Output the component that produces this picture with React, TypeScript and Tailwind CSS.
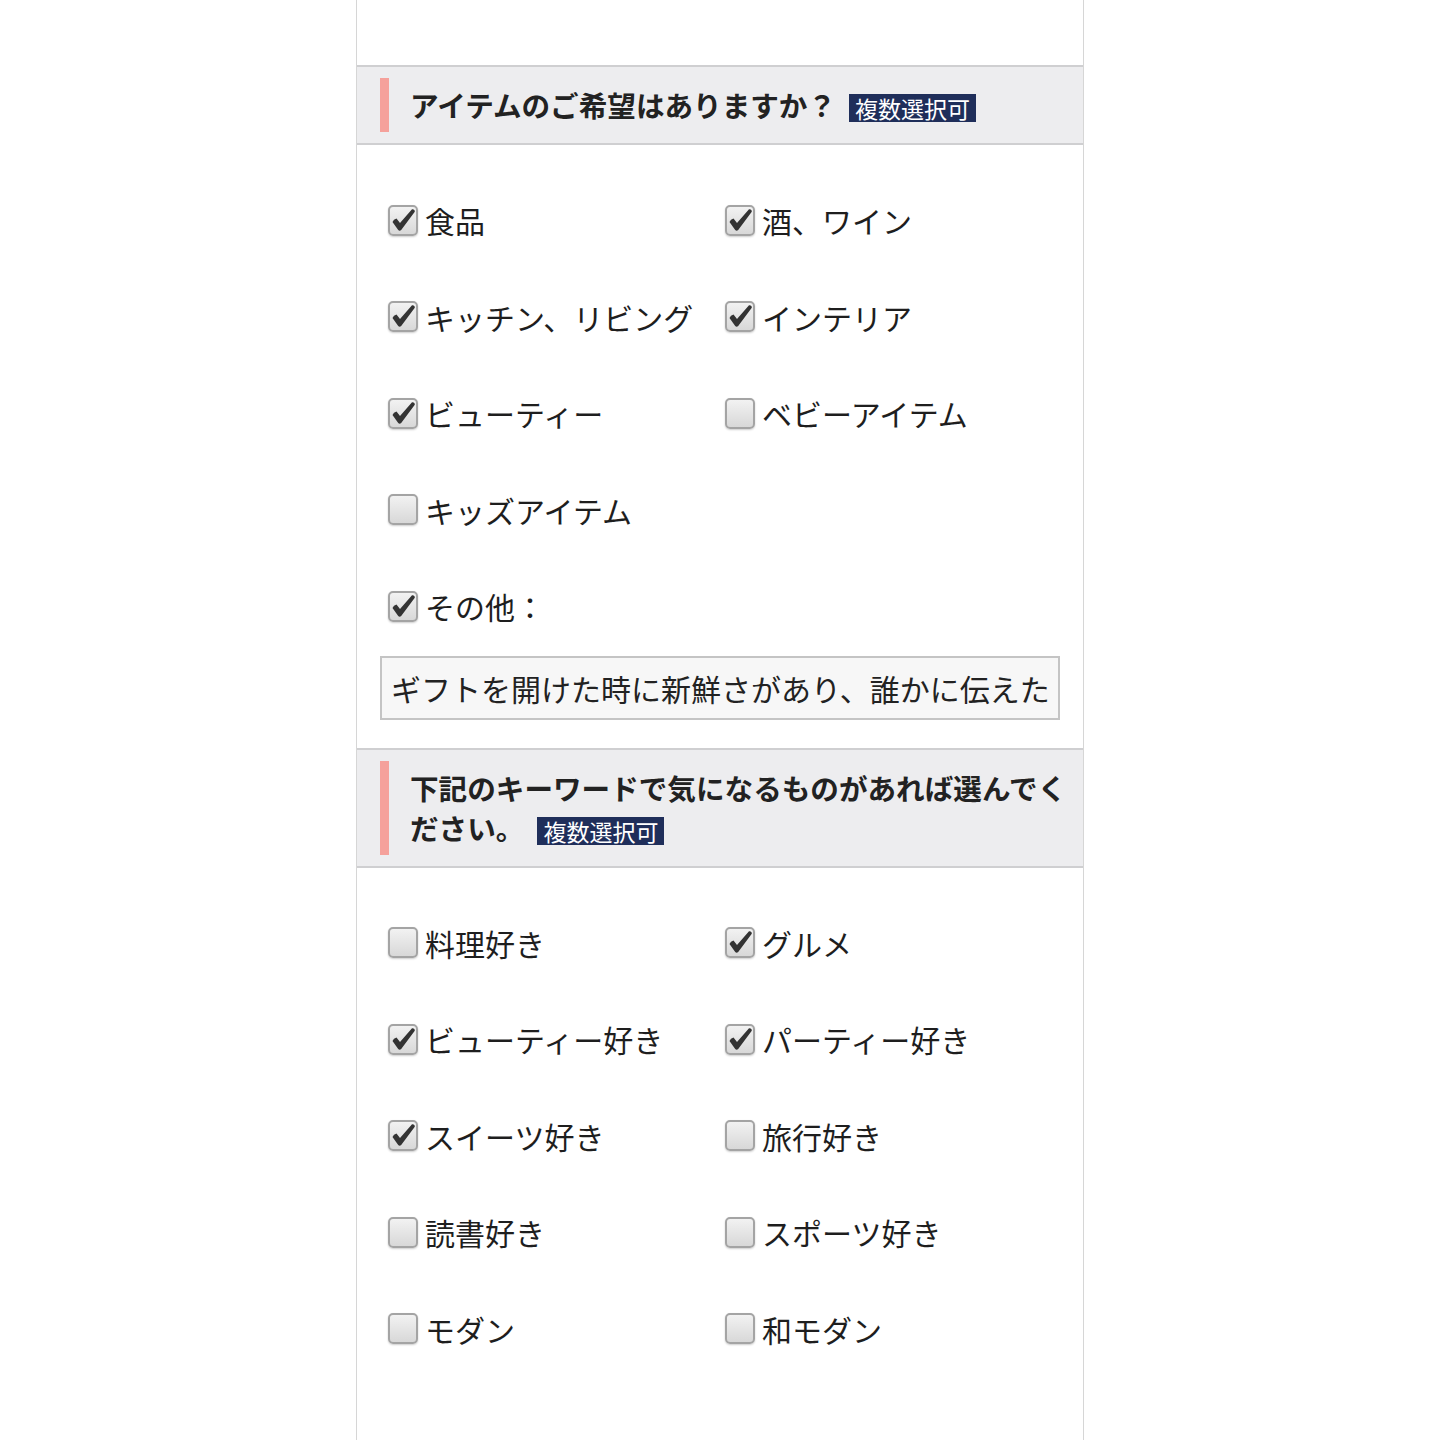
import React from 'react';

type Item = { label: string; checked: boolean };

const itemOptions: Item[] = [
  { label: '食品', checked: true },
  { label: '酒、ワイン', checked: true },
  { label: 'キッチン、リビング', checked: true },
  { label: 'インテリア', checked: true },
  { label: 'ビューティー', checked: true },
  { label: 'ベビーアイテム', checked: false },
  { label: 'キッズアイテム', checked: false },
];

const keywordOptions: Item[] = [
  { label: '料理好き', checked: false },
  { label: 'グルメ', checked: true },
  { label: 'ビューティー好き', checked: true },
  { label: 'パーティー好き', checked: true },
  { label: 'スイーツ好き', checked: true },
  { label: '旅行好き', checked: false },
  { label: '読書好き', checked: false },
  { label: 'スポーツ好き', checked: false },
  { label: 'モダン', checked: false },
  { label: '和モダン', checked: false },
];

function Checkbox({ checked }: { checked: boolean }) {
  return (
    <span className="relative flex h-[31px] w-[30px] shrink-0 items-center justify-center rounded-[5px] border-2 border-[#a4a4a4] bg-gradient-to-b from-[#f2f2f2] to-[#d8d8d8] shadow-[0_1px_2px_rgba(0,0,0,0.2)]">
      {checked && (
        <svg viewBox="0 0 30 30" className="absolute left-[-2px] top-[-2px] h-[30px] w-[30px]">
          <path
            d="M4.5 17 Q5.5 14 8.5 13.5 L12 18 L24 4.2 Q27 4 26.8 6.8 L13.2 25 Q11.6 26.4 10.2 25 Z"
            fill="#333333"
          />
        </svg>
      )}
    </span>
  );
}

function Option({ item }: { item: Item }) {
  return (
    <label className="flex h-[96.5px] items-center gap-[7px]">
      <Checkbox checked={item.checked} />
      <span className="text-[30px] leading-none text-[#1e1e1e]">{item.label}</span>
    </label>
  );
}

function Heading({ children }: { children: React.ReactNode }) {
  return (
    <div className="border-y-2 border-[#cfcfd1] bg-[#ededef] py-[11px] pl-[23px] pr-[10px]">
      <div className="border-l-[9px] border-[#f5a19b] py-[7px] pl-[21px]">
        <h2 className="text-[28.6px] font-bold leading-[40px] text-[#222]">{children}</h2>
      </div>
    </div>
  );
}

function Badge() {
  return (
    <span className="ml-[13px] inline-block bg-[#1f2e5a] px-[6px] align-[-1px] text-[23px] font-normal leading-[28px] text-white">
      複数選択可
    </span>
  );
}

export default function App() {
  return (
    <div className="min-h-screen bg-white" style={{ fontFamily: '"Noto Sans CJK JP", "Noto Sans", sans-serif' }}>
      <div className="mx-auto min-h-[1440px] w-[728px] border-x border-[#d6d6d6] pt-[65px]">
        <Heading>
          アイテムのご希望はありますか？<Badge />
        </Heading>

        <div className="grid grid-cols-[337px_1fr] pl-[31px] pt-[27px]">
          {itemOptions.map((item) => (
            <Option key={item.label} item={item} />
          ))}
          <div className="col-span-2">
            <Option item={{ label: 'その他：', checked: true }} />
          </div>
        </div>

        <div className="px-[23px] pt-[1px]">
          <input
            readOnly
            value="ギフトを開けた時に新鮮さがあり、誰かに伝えた"
            className="h-[64px] w-full border-2 border-[#c4c4c4] bg-[#f7f7f7] px-[9px] text-[30px] text-[#222] outline-none"
          />
        </div>

        <div className="mt-[28px]">
          <Heading>
            下記のキーワードで気になるものがあれば選んでください。<Badge />
          </Heading>
        </div>

        <div className="grid grid-cols-[337px_1fr] pl-[31px] pt-[27px]">
          {keywordOptions.map((item) => (
            <Option key={item.label} item={item} />
          ))}
        </div>
      </div>
    </div>
  );
}
